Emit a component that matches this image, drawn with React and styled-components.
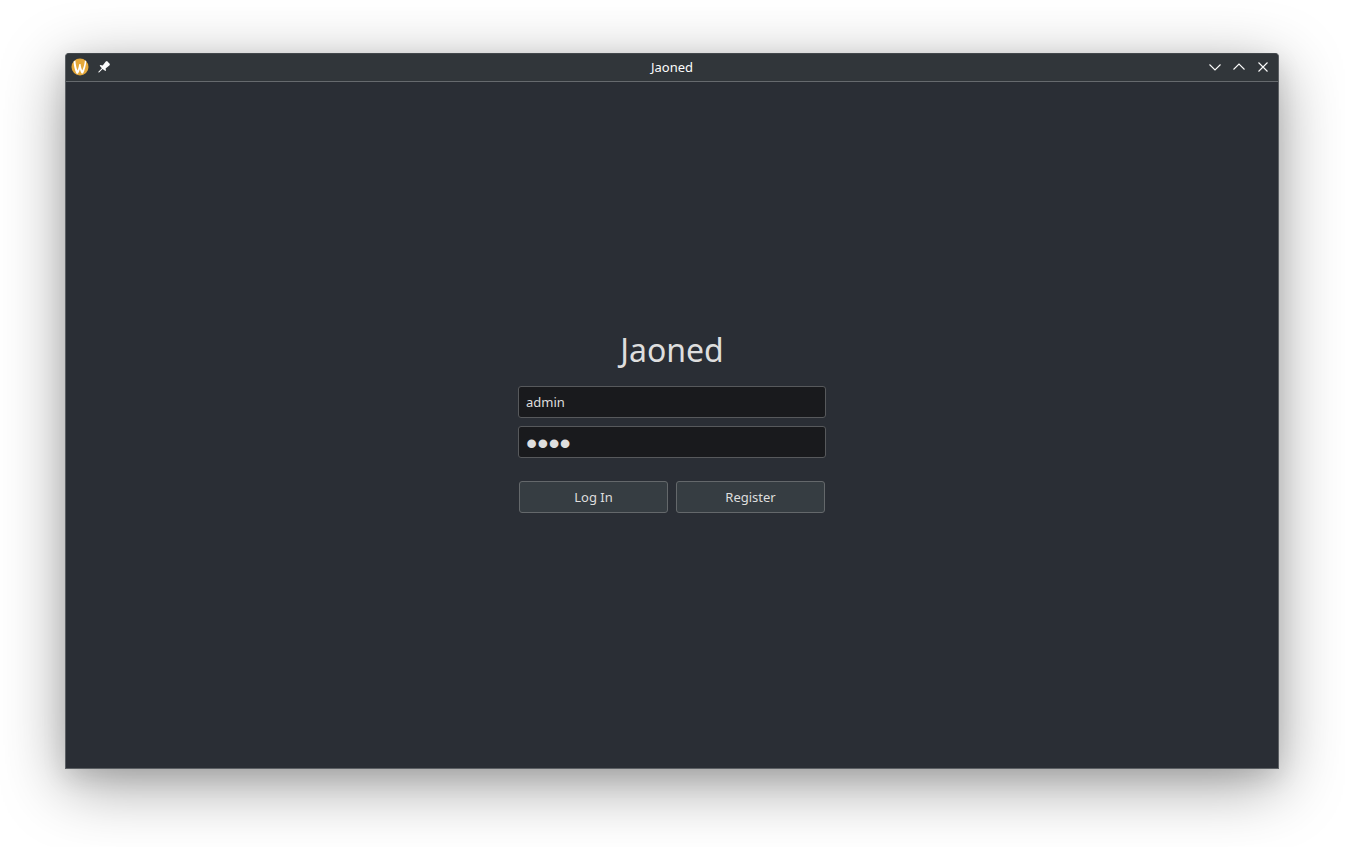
import React from "react";
import styled, { createGlobalStyle } from "styled-components";

const GlobalStyle = createGlobalStyle`
  *, *::before, *::after { box-sizing: border-box; }
  body {
    margin: 0;
    background: #ffffff;
    font-family: "Noto Sans", sans-serif;
    font-size: 13px;
    line-height: 18px;
  }
`;

const Desktop = styled.div`
  min-height: 100vh;
  padding: 53px 66px 78px 65px;
  display: flex;
  overflow: hidden;
`;

const Window = styled.main`
  flex: 1;
  display: flex;
  flex-direction: column;
  border: 1px solid #5c6064;
  border-top-color: #43484c;
  border-radius: 4px 4px 0 0;
  background: #2a2e35;
  box-shadow: 0 16px 64px rgba(0, 0, 0, 0.38), 0 8px 24px rgba(0, 0, 0, 0.1);
`;

const TitleBar = styled.header`
  display: grid;
  grid-template-columns: 1fr auto 1fr;
  align-items: center;
  height: 28px;
  padding: 0 4px 2px;
  border-bottom: 1px solid #666a6e;
  border-radius: 3px 3px 0 0;
  background: #31363a;
  color: #fcfcfc;
`;

const Controls = styled.div`
  display: flex;
  gap: 4px;
  justify-content: ${(p) => (p.$end ? "flex-end" : "flex-start")};
  padding-right: ${(p) => (p.$end ? "1px" : "0")};
`;

const IconButton = styled.button`
  display: flex;
  align-items: center;
  justify-content: center;
  width: 20px;
  height: 20px;
  padding: 0;
  border: 0;
  background: none;
  color: inherit;
`;

const WindowTitle = styled.span`
  font-size: 13px;
`;

const Content = styled.section`
  flex: 1;
  display: flex;
  align-items: center;
  justify-content: center;
`;

const LoginForm = styled.form`
  width: 308px;
  max-width: 100%;
  display: flex;
  flex-direction: column;
  gap: 8px;
  padding-bottom: 10px;
`;

const Heading = styled.h1`
  margin: 0 0 6px;
  font-size: 32px;
  line-height: 44px;
  font-weight: 400;
  text-align: center;
  color: #dedede;
`;

const Field = styled.input`
  width: 100%;
  height: 32px;
  padding: 0 7px;
  border: 1px solid #57595c;
  border-radius: 3px;
  outline: none;
  background: #191a1d;
  color: #dedede;
  font-family: inherit;
  font-size: 13px;
`;

const PasswordField = styled(Field)`
  padding-top: 4px;
  font-family: "Liberation Sans", sans-serif;
  font-size: 32px;
`;

const Actions = styled.div`
  display: flex;
  gap: 8px;
  margin-top: 15px;
  padding: 0 1px;
`;

const ActionButton = styled.button`
  flex: 1;
  height: 32px;
  padding: 0 8px;
  border: 1px solid #64686b;
  border-radius: 3px;
  background: #363d42;
  color: #dedede;
  font-family: inherit;
  font-size: 13px;
`;

const AppIcon = () => (
  <svg width="18" height="18" viewBox="0 0 18 18" aria-hidden="true">
    <circle cx="9" cy="9" r="8.5" fill="#e5a83a" />
    <path
      d="M2.6 3.6 L4.4 2.4 C4.7 6.4 5.4 10 6.5 12.4 C7.3 10.6 7.9 8.4 8.1 6.2 L9.6 6 C9.8 8.6 10.4 10.8 11.3 12.4 C12.6 9.6 13.6 6 13.9 2.6 L15.3 3 C15 7.4 13.8 12 12 15.6 L10.6 15.6 C9.8 14.4 9.2 12.8 8.9 11.2 C8.4 13 7.8 14.4 6.9 15.8 L5.4 15.6 C3.8 12 2.8 7.8 2.6 3.6 Z"
      fill="#fff"
    />
  </svg>
);

const PinIcon = () => (
  <svg width="18" height="18" viewBox="0 0 18 18" fill="currentColor" aria-hidden="true">
    <path d="M12 3.1 L14.9 5.9 L14.6 7.2 L10.6 10.4 L11 12.6 L10.4 13.1 L7.6 10.9 L4.1 14.4 L3.4 14.4 L3.4 13.7 L6.9 10.2 L4.7 7.7 L5.3 7.1 L7.7 7.5 L10.8 3.5 Z" />
  </svg>
);

const LineIcon = ({ d }) => (
  <svg width="18" height="18" viewBox="0 0 18 18" fill="none" stroke="currentColor" strokeWidth="1.1" aria-hidden="true">
    <path d={d} />
  </svg>
);

export default function App() {
  return (
    <>
      <GlobalStyle />
      <Desktop>
        <Window>
          <TitleBar>
            <Controls>
              <IconButton type="button" aria-label="Window menu"><AppIcon /></IconButton>
              <IconButton type="button" aria-label="Keep on all desktops"><PinIcon /></IconButton>
            </Controls>
            <WindowTitle>Jaoned</WindowTitle>
            <Controls $end>
              <IconButton type="button" aria-label="Minimize"><LineIcon d="M3.5 6.5 L9 12 L14.5 6.5" /></IconButton>
              <IconButton type="button" aria-label="Maximize"><LineIcon d="M3.5 11.5 L9 6 L14.5 11.5" /></IconButton>
              <IconButton type="button" aria-label="Close"><LineIcon d="M4.5 4.5 L13.5 13.5 M13.5 4.5 L4.5 13.5" /></IconButton>
            </Controls>
          </TitleBar>
          <Content>
            <LoginForm onSubmit={(e) => e.preventDefault()}>
              <Heading>Jaoned</Heading>
              <Field type="text" aria-label="Username" defaultValue="admin" autoComplete="username" />
              <PasswordField type="password" aria-label="Password" defaultValue="pass" autoComplete="current-password" />
              <Actions>
                <ActionButton type="submit">Log In</ActionButton>
                <ActionButton type="button">Register</ActionButton>
              </Actions>
            </LoginForm>
          </Content>
        </Window>
      </Desktop>
    </>
  );
}
